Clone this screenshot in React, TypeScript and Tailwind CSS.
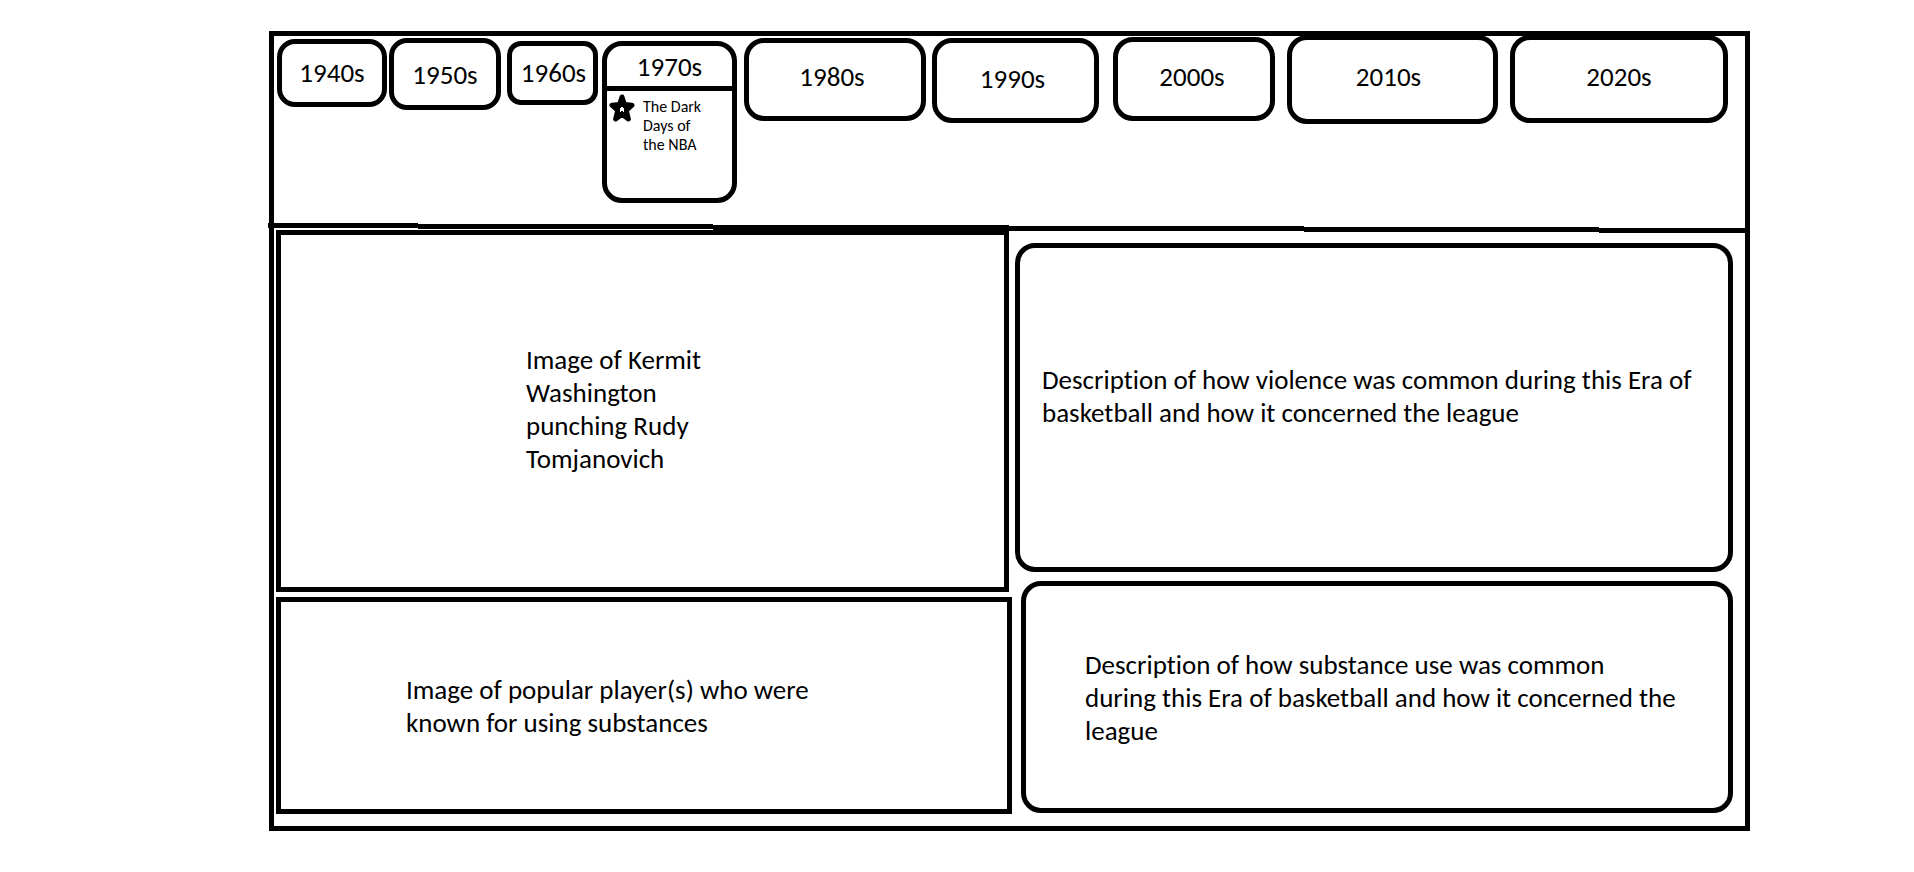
import React from "react";

type Decade = {
  label: string;
  item: string;
  button: string;
};

const before: Decade[] = [
  { label: "1940s", item: "ml-[3px] mt-[3px] flex-[110]", button: "h-[68px] rounded-[18px] pb-[2px]" },
  { label: "1950s", item: "ml-[2px] mt-[2px] flex-[112]", button: "h-[72px] rounded-[18px]" },
  { label: "1960s", item: "ml-[6px] mt-[5px] flex-[91]", button: "h-[64px] rounded-[14px] pl-[2px] pb-[2px]" },
];

const after: Decade[] = [
  { label: "1980s", item: "ml-[7px] mt-[2px] flex-[182]", button: "h-[83px] rounded-[20px] pr-1.5 pb-1.5" },
  { label: "1990s", item: "ml-[6px] mt-[2px] flex-[167]", button: "h-[85px] rounded-[20px] pr-1.5 pb-1" },
  { label: "2000s", item: "ml-[14px] mt-[1px] flex-[162]", button: "h-[84px] rounded-[20px] pr-1 pb-1.5" },
  { label: "2010s", item: "ml-[12px] -mt-px flex-[211]", button: "h-[89px] rounded-[20px] pr-2 pb-1.5" },
  { label: "2020s", item: "ml-[12px] mr-[17px] -mt-px flex-[218]", button: "h-[88px] rounded-[20px] pb-1.5" },
];

function DecadeButton({ label, item, button }: Decade) {
  return (
    <li className={`min-w-0 ${item}`}>
      <button
        type="button"
        className={`flex w-full items-center justify-center border-[5px] border-black bg-white ${button}`}
      >
        {label}
      </button>
    </li>
  );
}

function Star() {
  return (
    <svg viewBox="0 0 26 28" className="h-[28px] w-[26px] shrink-0" aria-hidden="true">
      <path
        d="M13 3 L15.4 10.5 L23 11.2 L17.2 16.4 L19.4 25 L13 20.2 L6.6 25 L8.8 16.4 L3 11.2 L10.6 10.5 Z"
        fill="#000"
        stroke="#000"
        strokeWidth="5"
        strokeLinejoin="round"
      />
      <path d="M12 13 H14 V14 H15 V18 H14 V17 H12 V18 H11 V14 H12 Z" fill="#fff" />
    </svg>
  );
}

/* A hand-drawn rule that drops one pixel at each step as it crosses the frame. */
function Rule() {
  return (
    <svg
      viewBox="0 0 1471 7"
      preserveAspectRatio="none"
      className="block h-[7px] w-full overflow-visible"
      shapeRendering="crispEdges"
      aria-hidden="true"
    >
      <rect x="-6" y="0" width="150" height="5" />
      <rect x="144" y="1" width="295" height="5" />
      <rect x="439" y="2" width="296" height="5" />
      <rect x="735" y="3" width="295" height="5" />
      <rect x="1030" y="4" width="295" height="5" />
      <rect x="1325" y="5" width="146" height="5" />
    </svg>
  );
}

export default function App() {
  return (
    <div className="min-h-screen bg-white pt-[31px] pr-[164px] pb-10 pl-[269px] font-['Carlito','Lato',sans-serif] text-[27px] leading-[33px] text-black [font-variant-ligatures:none]">
      <main className="border-[5px] border-black">
        <nav aria-label="Decades" className="min-h-[187px]">
          <ul className="flex items-start">
            {before.map((d) => (
              <DecadeButton key={d.label} {...d} />
            ))}
            <li className="mt-[5px] ml-[4px] min-w-0 flex-[135]">
              <div className="min-h-[162px] rounded-[20px] border-[5px] border-black">
                <button type="button" className="block h-[45px] w-full border-b-[5px] border-black">
                  1970s
                </button>
                <a href="#dark-days" className="flex gap-[8px] pt-[3px] pl-[2px] text-[16px] leading-[19px]">
                  <Star />
                  <span className="w-[66px] pt-[3px]">The Dark Days of the NBA</span>
                </a>
              </div>
            </li>
            {after.map((d) => (
              <DecadeButton key={d.label} {...d} />
            ))}
          </ul>
        </nav>
        <Rule />
        <div id="dark-days" className="flex gap-[3px] pr-[12px] pb-[12px] pl-[2px]">
          <div className="flex min-w-0 flex-[736] flex-col gap-[5px]">
            <section className="mr-[3px] flex min-h-[362px] items-center border-[5px] border-black pb-[4px] pl-[245px]">
              <p className="max-w-[190px]">Image of Kermit Washington punching Rudy Tomjanovich</p>
            </section>
            <section className="flex min-h-[217px] items-center border-[5px] border-black pl-[125px]">
              <p className="max-w-[430px]">Image of popular player(s) who were known for using substances</p>
            </section>
          </div>
          <div className="flex min-w-0 flex-[718] flex-col gap-[9px] pt-[13px]">
            <section className="flex min-h-[329px] items-center rounded-[20px] border-[5px] border-black pb-[24px] pl-[22px]">
              <p className="max-w-[670px]">
                Description of how violence was common during this Era of basketball and how it concerned the league
              </p>
            </section>
            <section className="ml-[6px] flex min-h-[232px] items-center rounded-[20px] border-[5px] border-black pl-[59px]">
              <p className="max-w-[592px]">
                Description of how substance use was common during this Era of basketball and how it concerned the
                league
              </p>
            </section>
          </div>
        </div>
      </main>
    </div>
  );
}
